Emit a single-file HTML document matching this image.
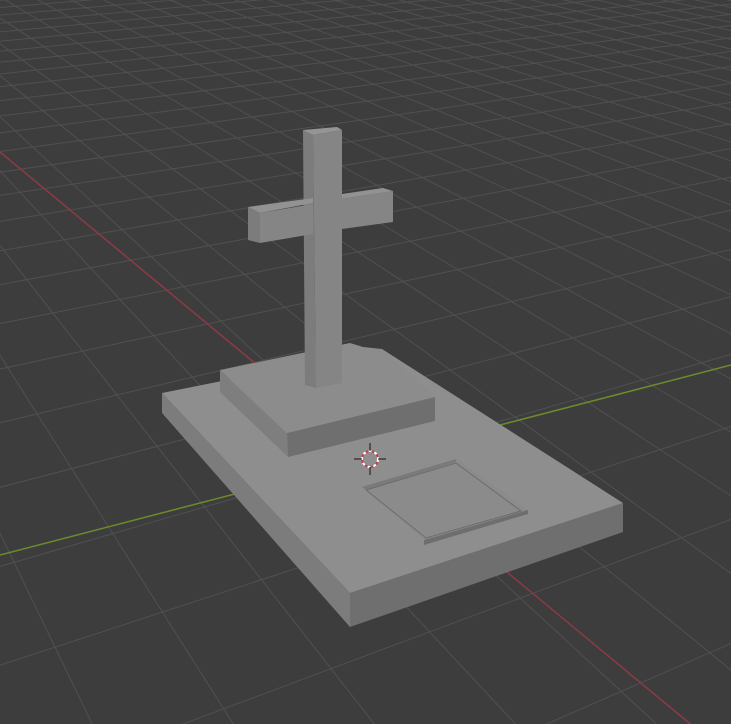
<!DOCTYPE html>
<html><head><meta charset="utf-8"><style>
html,body{margin:0;padding:0;background:#3d3d3d;overflow:hidden;width:731px;height:724px}
svg{display:block}
</style></head><body>
<svg id="s" width="731" height="724" viewBox="0 0 731 724" xmlns="http://www.w3.org/2000/svg">
<rect width="731" height="724" fill="#3d3d3d"/>
<g id="grid" stroke="#505050" stroke-width="1" fill="none"></g>
<line x1="0" y1="152" x2="700" y2="732" stroke="#8c3a44" stroke-width="1.5"/>
<line x1="0" y1="555" x2="731" y2="365" stroke="#6b8c2c" stroke-width="1.5"/>
<!-- slab -->
<polygon points="162,393 350,593 350,627 162,413" fill="#7c7c7c"/>
<polygon points="350,593 623,503 623,532 350,627" fill="#6f6f6f"/>
<polygon points="162,393 382,349 623,503 350,593" fill="#8e8e8e"/>
<!-- plaque -->
<polygon points="362,487 456,459 528,510 424,540" fill="#8b8b8b"/>
<polygon points="362,487 456,459 456,462 366,490" fill="#7a7a7a"/>
<polygon points="424,540 528,510 528,514 424,545" fill="#6e6e6e"/>
<polyline points="366,490 456,463 521,511 426,538 366,490" fill="none" stroke="#6c6c6c" stroke-width="1"/>
<!-- step -->
<polygon points="220,370 287,433 288,457 220,392" fill="#7e7e7e"/>
<polygon points="287,433 435,397 435,421 288,457" fill="#6f6f6f"/>
<polygon points="220,370 350,343 363,347 382,349 435,397 287,433" fill="#8c8c8c"/>
<!-- cross post -->
<polygon points="303,130 313,135 316,388 305,385" fill="#7c7c7c"/>
<polygon points="303,130 337,127 342,130 313,135" fill="#959595"/>
<polygon points="313,135 342,130 342,383 316,388" fill="#858585"/>
<!-- crossbar -->
<polygon points="248,207 260,213 260,243 248,240" fill="#7c7c7c"/>
<polygon points="248,207 313,198 313,203 260,213" fill="#929292"/>
<polygon points="342,194 383,188 393,191 342,199" fill="#929292"/>
<polygon points="260,213 313,204 313,234 260,243" fill="#858585"/>
<polygon points="342,199 393,191 393,222 342,229" fill="#858585"/>
<!-- cursor -->
<circle cx="370" cy="459" r="8" fill="none" stroke="#fff" stroke-width="2" stroke-dasharray="3 3"/>
<circle cx="370" cy="459" r="8" fill="none" stroke="#c0404a" stroke-width="2" stroke-dasharray="3 3" stroke-dashoffset="3"/>
<g stroke="#111" stroke-width="1"><line x1="370" y1="443" x2="370" y2="451"/><line x1="370" y1="467" x2="370" y2="475"/><line x1="354" y1="459" x2="362" y2="459"/><line x1="378" y1="459" x2="386" y2="459"/></g>
</svg>
<script>
(function(){
var O=[370,459],Vr=[-364,-220],Vg=[2711,-220],a=0.085,b=0.033;
function P(u,v){var d=a*u+b*v+1;return d<=0.03?null:[(a*u*Vr[0]+b*v*Vg[0]+O[0])/d,(a*u*Vr[1]+b*v*Vg[1]+O[1])/d];}
var g=document.getElementById('grid'),s='';
function line(f){var pts=[];for(var t=-300;t<=300;t+=0.25){var p=f(t);if(p&&p[0]>-50&&p[0]<800&&p[1]>-50&&p[1]<800){pts.push(p);}}
 if(pts.length>1){s+='M'+pts[0][0].toFixed(1)+' '+pts[0][1].toFixed(1)+'L'+pts[pts.length-1][0].toFixed(1)+' '+pts[pts.length-1][1].toFixed(1);}}
for(var i=-40;i<=200;i++){(function(i){line(function(t){return P(i,t)});line(function(t){return P(t,i)});})(i);}
var p=document.createElementNS('http://www.w3.org/2000/svg','path');p.setAttribute('d',s);g.appendChild(p);
})();
</script>
</body></html>
